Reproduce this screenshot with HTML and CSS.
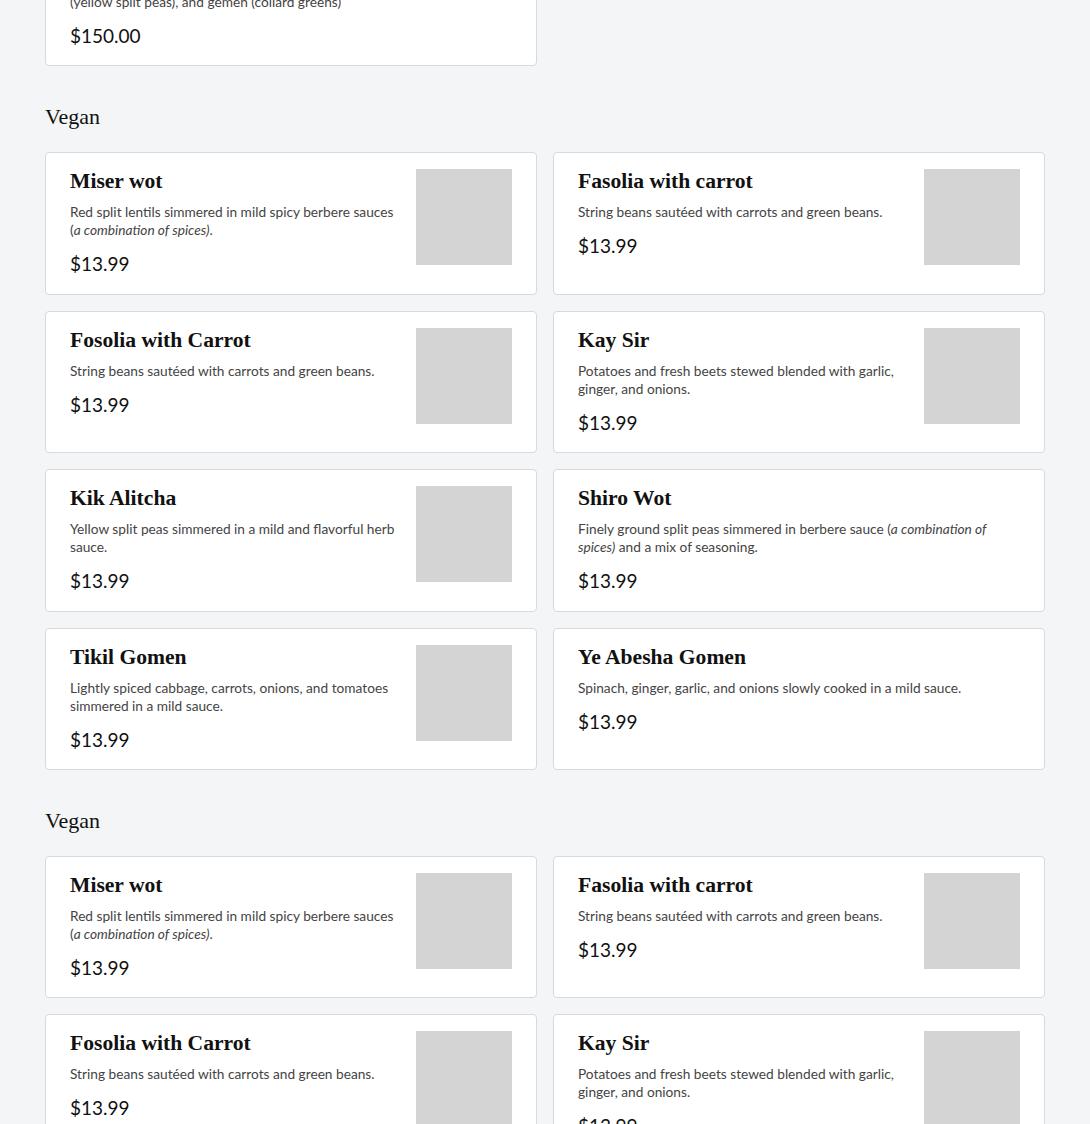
FILE: index.html
```html
<!DOCTYPE html>
<html lang="en">
<head>
<meta charset="utf-8">
<title>Menu</title>
<link rel="stylesheet" href="styles.css">
</head>
<body>
<main class="menu">
  <section class="section">
    <div class="grid">
      <article class="card">
        <div class="info">
          <h3 class="name">Beyaynetu</h3>
          <p class="desc">A vegan sampler served on injera with misir wot (red lentils), kik alicha<br>(yellow split peas), and gemen (collard greens)</p>
          <p class="price">$150.00</p>
        </div>
      </article>
    </div>
  </section>

  <section class="section">
    <h2 class="section-title">Vegan</h2>
    <div class="grid">
      <article class="card">
        <div class="info">
          <h3 class="name">Miser wot</h3>
          <p class="desc">Red split lentils simmered in mild spicy berbere sauces (<em>a combination of spices)</em>.</p>
          <p class="price">$13.99</p>
        </div>
        <div class="thumb"></div>
      </article>
      <article class="card">
        <div class="info">
          <h3 class="name">Fasolia with carrot</h3>
          <p class="desc">String beans sautéed with carrots and green beans.</p>
          <p class="price">$13.99</p>
        </div>
        <div class="thumb"></div>
      </article>
      <article class="card">
        <div class="info">
          <h3 class="name">Fosolia with Carrot</h3>
          <p class="desc">String beans sautéed with carrots and green beans.</p>
          <p class="price">$13.99</p>
        </div>
        <div class="thumb"></div>
      </article>
      <article class="card">
        <div class="info">
          <h3 class="name">Kay Sir</h3>
          <p class="desc">Potatoes and fresh beets stewed blended with garlic, ginger, and onions.</p>
          <p class="price">$13.99</p>
        </div>
        <div class="thumb"></div>
      </article>
      <article class="card">
        <div class="info">
          <h3 class="name">Kik Alitcha</h3>
          <p class="desc">Yellow split peas simmered in a mild and flavorful herb sauce.</p>
          <p class="price">$13.99</p>
        </div>
        <div class="thumb"></div>
      </article>
      <article class="card">
        <div class="info">
          <h3 class="name">Shiro Wot</h3>
          <p class="desc">Finely ground split peas simmered in berbere sauce (<em>a combination of spices)</em> and a mix of seasoning.</p>
          <p class="price">$13.99</p>
        </div>
      </article>
      <article class="card">
        <div class="info">
          <h3 class="name">Tikil Gomen</h3>
          <p class="desc">Lightly spiced cabbage, carrots, onions, and tomatoes simmered in a mild sauce.</p>
          <p class="price">$13.99</p>
        </div>
        <div class="thumb"></div>
      </article>
      <article class="card">
        <div class="info">
          <h3 class="name">Ye Abesha Gomen</h3>
          <p class="desc">Spinach, ginger, garlic, and onions slowly cooked in a mild sauce.</p>
          <p class="price">$13.99</p>
        </div>
      </article>
    </div>
  </section>

  <section class="section">
    <h2 class="section-title">Vegan</h2>
    <div class="grid">
      <article class="card">
        <div class="info">
          <h3 class="name">Miser wot</h3>
          <p class="desc">Red split lentils simmered in mild spicy berbere sauces (<em>a combination of spices)</em>.</p>
          <p class="price">$13.99</p>
        </div>
        <div class="thumb"></div>
      </article>
      <article class="card">
        <div class="info">
          <h3 class="name">Fasolia with carrot</h3>
          <p class="desc">String beans sautéed with carrots and green beans.</p>
          <p class="price">$13.99</p>
        </div>
        <div class="thumb"></div>
      </article>
      <article class="card">
        <div class="info">
          <h3 class="name">Fosolia with Carrot</h3>
          <p class="desc">String beans sautéed with carrots and green beans.</p>
          <p class="price">$13.99</p>
        </div>
        <div class="thumb"></div>
      </article>
      <article class="card">
        <div class="info">
          <h3 class="name">Kay Sir</h3>
          <p class="desc">Potatoes and fresh beets stewed blended with garlic, ginger, and onions.</p>
          <p class="price">$13.99</p>
        </div>
        <div class="thumb"></div>
      </article>
    </div>
  </section>
</main>
</body>
</html>
```
FILE: styles.css
```css
html, body {
  margin: 0;
  padding: 0;
  background: #f4f5f7;
}

body {
  font-family: "Lato", "Noto Sans", sans-serif;
  color: #111;
}

.menu {
  width: 1000px;
  margin: -76px auto 0;
  display: flex;
  flex-direction: column;
  gap: 36px;
}

.section-title {
  font-family: "Liberation Serif", "DejaVu Serif", serif;
  font-weight: 400;
  font-size: 22px;
  line-height: 30px;
  margin: 0 0 20px;
  color: #111;
}

.grid {
  display: grid;
  grid-template-columns: 1fr 1fr;
  gap: 16px;
}

.card {
  background: #fff;
  border: 1px solid #d6d9de;
  border-radius: 4px;
  padding: 16px 24px;
  display: flex;
  gap: 16px;
  align-items: flex-start;
}

.info {
  flex: 1;
  min-width: 0;
}

.name {
  font-family: "Liberation Serif", "DejaVu Serif", serif;
  font-weight: 700;
  font-size: 21.6px;
  line-height: 24px;
  margin: 0 0 10px;
  color: #111;
}

.desc {
  font-size: 13.7px;
  line-height: 18px;
  color: #444;
  margin: 0 0 12px;
}

.desc em {
  font-style: italic;
}

.price {
  font-size: 19px;
  line-height: 26.4px;
  margin: 0;
  color: #111;
}

.thumb {
  width: 96px;
  height: 96px;
  flex: none;
  background: #d4d4d4;
}
```
